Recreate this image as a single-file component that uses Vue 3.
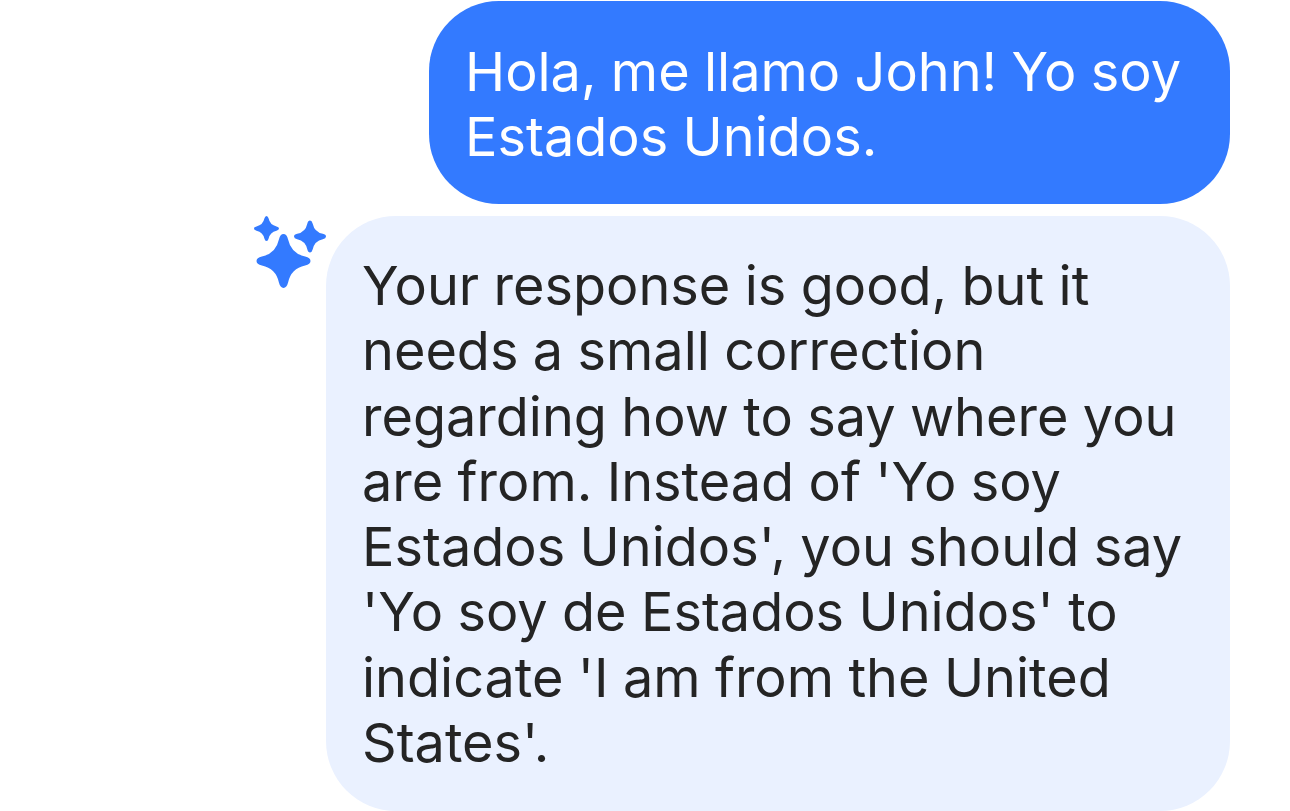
<script setup>
const question = 'Hola, me llamo John! Yo soy Estados Unidos.'
const feedback = "Your response is good, but it needs a small correction regarding how to say where you are from. Instead of 'Yo soy Estados Unidos', you should say 'Yo soy de Estados Unidos' to indicate 'I am from the United States'."

const sparkles = [
  { cx: 283.5, cy: 261, r: 27 },
  { cx: 266.5, cy: 228.5, r: 12.5 },
  { cx: 310, cy: 236.5, r: 16 }
]

// four pointed star with rounded tips
function sparklePath({ cx, cy, r }) {
  const tip = r * 0.17
  const near = r * 0.8
  const inner = r * 0.28
  return [
    `M${cx - tip} ${cy - near}`,
    `Q${cx - tip * 0.7} ${cy - r} ${cx} ${cy - r}`,
    `Q${cx + tip * 0.7} ${cy - r} ${cx + tip} ${cy - near}`,
    `Q${cx + inner} ${cy - inner} ${cx + near} ${cy - tip}`,
    `Q${cx + r} ${cy - tip * 0.7} ${cx + r} ${cy}`,
    `Q${cx + r} ${cy + tip * 0.7} ${cx + near} ${cy + tip}`,
    `Q${cx + inner} ${cy + inner} ${cx + tip} ${cy + near}`,
    `Q${cx + tip * 0.7} ${cy + r} ${cx} ${cy + r}`,
    `Q${cx - tip * 0.7} ${cy + r} ${cx - tip} ${cy + near}`,
    `Q${cx - inner} ${cy + inner} ${cx - near} ${cy + tip}`,
    `Q${cx - r} ${cy + tip * 0.7} ${cx - r} ${cy}`,
    `Q${cx - r} ${cy - tip * 0.7} ${cx - near} ${cy - tip}`,
    `Q${cx - inner} ${cy - inner} ${cx - tip} ${cy - near}`,
    'Z'
  ].join(' ')
}
</script>

<template>
  <div class="chat">
    <div class="bubble user">{{ question }}</div>
    <div class="reply">
      <svg class="sparkles" width="76" height="76" viewBox="252 214 76 76">
        <path v-for="(s, i) in sparkles" :key="i" :d="sparklePath(s)" fill="#337aff" />
      </svg>
      <div class="bubble bot">{{ feedback }}</div>
    </div>
  </div>
</template>

<style scoped>
.chat {
  width: 1290px;
  height: 811px;
  box-sizing: border-box;
  padding: 1px 60px 0 0;
  display: flex;
  flex-direction: column;
  align-items: flex-end;
  gap: 12px;
  overflow: hidden;
  font-family: Inter, "Liberation Sans", sans-serif;
  font-size: 54px;
  line-height: 65.3px;
  word-spacing: -0.8px;
}
.bubble {
  box-sizing: border-box;
  border-radius: 70px;
  padding: 38px 36px;
}
.user {
  width: 801px;
  height: 203px;
  background: #337aff;
  color: #fff;
}
.reply {
  display: flex;
  align-items: flex-start;
}
.sparkles {
  display: block;
  margin-top: -2px;
  margin-right: -2px;
}
.bot {
  width: 904px;
  height: 595px;
  background: #eaf1ff;
  color: #242424;
  padding-top: 37px;
}
</style>

<style>
html, body {
  background: #fff;
}
</style>
